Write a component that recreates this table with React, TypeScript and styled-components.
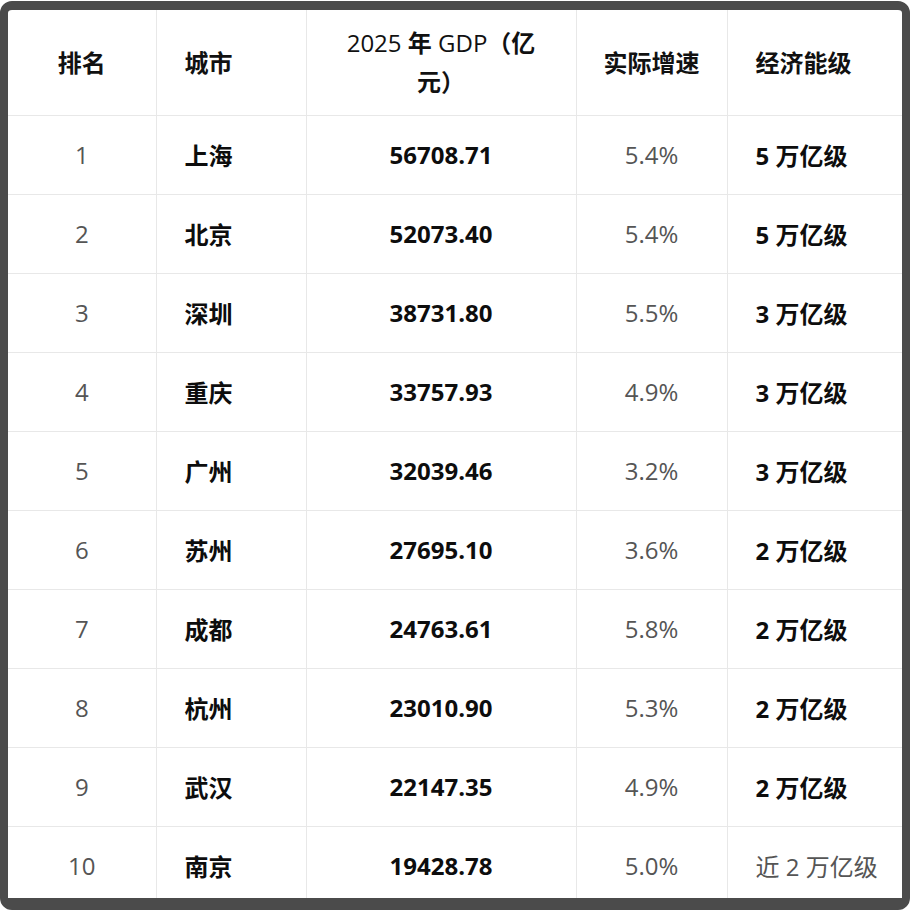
import React from "react";
import styled, { createGlobalStyle } from "styled-components";

const Global = createGlobalStyle`
  html, body { margin: 0; padding: 0; background: #ffffff; }
  body { font-family: "Open Sans", "Noto Sans CJK SC", sans-serif; }
`;

const Frame = styled.div`
  box-sizing: border-box;
  margin-top: 1px;
  width: 910px;
  height: 909px;
  border: 8px solid #4b4b4b;
  border-top-width: 9px;
  border-bottom-width: 12px;
  border-radius: 12px;
  overflow: hidden;
  background: #ffffff;
`;

const Table = styled.table`
  width: 894px;
  table-layout: fixed;
  border-collapse: collapse;
  font-size: 24px;
  color: #111111;
`;

type Align = "center" | "left";

const HeadCell = styled.th<{ $align?: Align }>`
  height: 105px;
  padding: 0 ${(p) => (p.$align === "left" ? "0 0 28px" : "0")};
  box-sizing: border-box;
  text-align: ${(p) => p.$align ?? "center"};
  vertical-align: middle;
  font-weight: 700;
  line-height: 39px;
  border-right: 1px solid #e8e8e8;
  border-bottom: 1px solid #e8e8e8;
  &:last-child { border-right: none; }
`;

const Light = styled.span`
  font-weight: 400;
`;

const Row = styled.tr``;

const Cell = styled.td<{ $bold?: boolean; $align?: Align }>`
  height: 79px;
  padding: ${(p) => (p.$align === "left" ? "0 0 0 28px" : "0")};
  box-sizing: border-box;
  text-align: ${(p) => p.$align ?? "center"};
  vertical-align: middle;
  font-weight: ${(p) => (p.$bold ? 700 : 400)};
  color: ${(p) => (p.$bold ? "#0d0d0d" : "#555555")};
  border-right: 1px solid #e8e8e8;
  border-bottom: 1px solid #e8e8e8;
  &:last-child { border-right: none; }
`;

const rows: [string, string, string, string, string, boolean][] = [
  ["1", "上海", "56708.71", "5.4%", "5 万亿级", true],
  ["2", "北京", "52073.40", "5.4%", "5 万亿级", true],
  ["3", "深圳", "38731.80", "5.5%", "3 万亿级", true],
  ["4", "重庆", "33757.93", "4.9%", "3 万亿级", true],
  ["5", "广州", "32039.46", "3.2%", "3 万亿级", true],
  ["6", "苏州", "27695.10", "3.6%", "2 万亿级", true],
  ["7", "成都", "24763.61", "5.8%", "2 万亿级", true],
  ["8", "杭州", "23010.90", "5.3%", "2 万亿级", true],
  ["9", "武汉", "22147.35", "4.9%", "2 万亿级", true],
  ["10", "南京", "19428.78", "5.0%", "近 2 万亿级", false],
];

export default function App() {
  return (
    <>
      <Global />
      <Frame>
        <Table>
          <colgroup>
            <col style={{ width: 148 }} />
            <col style={{ width: 150 }} />
            <col style={{ width: 270 }} />
            <col style={{ width: 151 }} />
            <col style={{ width: 175 }} />
          </colgroup>
          <thead>
            <tr>
              <HeadCell>排名</HeadCell>
              <HeadCell $align="left">城市</HeadCell>
              <HeadCell>
                <Light>2025</Light> 年 <Light>GDP</Light>（亿
                <br />
                元）
              </HeadCell>
              <HeadCell>实际增速</HeadCell>
              <HeadCell $align="left">经济能级</HeadCell>
            </tr>
          </thead>
          <tbody>
            {rows.map((r) => (
              <Row key={r[0]}>
                <Cell>{r[0]}</Cell>
                <Cell $bold $align="left">{r[1]}</Cell>
                <Cell $bold>{r[2]}</Cell>
                <Cell>{r[3]}</Cell>
                <Cell $bold={r[5]} $align="left">{r[4]}</Cell>
              </Row>
            ))}
          </tbody>
        </Table>
      </Frame>
    </>
  );
}
